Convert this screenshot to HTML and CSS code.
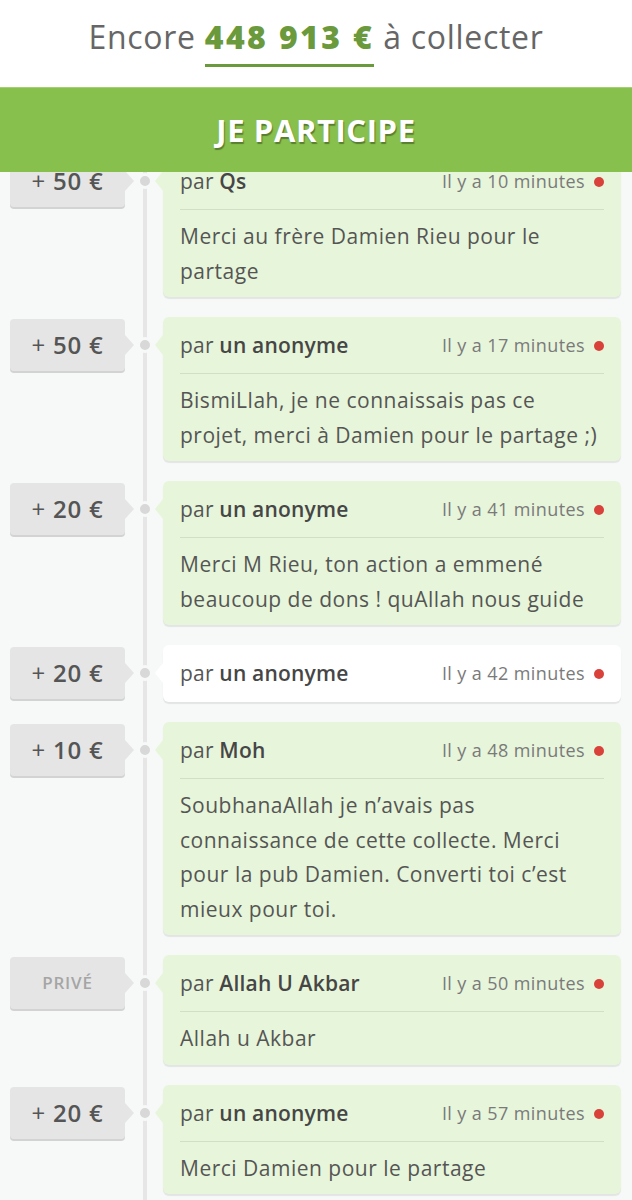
FILE: index.html
```html
<!DOCTYPE html>
<html lang="fr">
<head>
    <meta charset="UTF-8">
    <meta name="viewport" content="width=device-width, initial-scale=1.0">
    <title>Collecte - Dons</title>
    <link rel="stylesheet" href="styles.css">
</head>
<body>
    <header class="top">
        <div class="goal">
            Encore <span class="goal-amount">448 913 €</span> à collecter
        </div>
        <a class="cta" href="#">JE PARTICIPE</a>
    </header>

    <main class="feed">
        <div class="donation">
            <div class="amount"><span class="plus">+</span> 50 €</div>
            <div class="card">
                <div class="card-head">
                    <span class="author">par <b>Qs</b></span>
                    <span class="time">Il y a 10 minutes</span>
                </div>
                <p class="message">Merci au frère Damien Rieu pour le partage</p>
            </div>
        </div>

        <div class="donation">
            <div class="amount"><span class="plus">+</span> 50 €</div>
            <div class="card">
                <div class="card-head">
                    <span class="author">par <b>un anonyme</b></span>
                    <span class="time">Il y a 17 minutes</span>
                </div>
                <p class="message">BismiLlah, je ne connaissais pas ce projet, merci à Damien pour le partage ;)</p>
            </div>
        </div>

        <div class="donation">
            <div class="amount"><span class="plus">+</span> 20 €</div>
            <div class="card">
                <div class="card-head">
                    <span class="author">par <b>un anonyme</b></span>
                    <span class="time">Il y a 41 minutes</span>
                </div>
                <p class="message">Merci M Rieu, ton action a emmené beaucoup de dons ! quAllah nous guide</p>
            </div>
        </div>

        <div class="donation">
            <div class="amount"><span class="plus">+</span> 20 €</div>
            <div class="card card-plain">
                <div class="card-head">
                    <span class="author">par <b>un anonyme</b></span>
                    <span class="time">Il y a 42 minutes</span>
                </div>
            </div>
        </div>

        <div class="donation">
            <div class="amount"><span class="plus">+</span> 10 €</div>
            <div class="card">
                <div class="card-head">
                    <span class="author">par <b>Moh</b></span>
                    <span class="time">Il y a 48 minutes</span>
                </div>
                <p class="message">SoubhanaAllah je n’avais pas connaissance de cette collecte. Merci pour la pub Damien. Converti toi c’est mieux pour toi.</p>
            </div>
        </div>

        <div class="donation">
            <div class="amount amount-private">PRIVÉ</div>
            <div class="card">
                <div class="card-head">
                    <span class="author">par <b>Allah U Akbar</b></span>
                    <span class="time">Il y a 50 minutes</span>
                </div>
                <p class="message">Allah u Akbar</p>
            </div>
        </div>

        <div class="donation">
            <div class="amount"><span class="plus">+</span> 20 €</div>
            <div class="card">
                <div class="card-head">
                    <span class="author">par <b>un anonyme</b></span>
                    <span class="time">Il y a 57 minutes</span>
                </div>
                <p class="message">Merci Damien pour le partage</p>
            </div>
        </div>
    </main>
</body>
</html>
```

FILE: styles.css
```css
/* Base */
body {
    font-family: "Open Sans", Lato, sans-serif;
    background-color: #f7f8f8;
    color: #555;
    margin: 0;
    padding: 0;
}

/* Barre du haut (reste fixe pendant le défilement) */
.top {
    position: fixed;
    top: 0;
    left: 0;
    right: 0;
    z-index: 10;
}
.goal {
    background: white;
    height: 87px;
    box-sizing: border-box;
    padding-top: 15px;
    text-align: center;
    font-size: 32px;
    letter-spacing: 0.7px;
    color: #666;
}
.goal-amount {
    color: #6b9a3d;
    font-weight: 800;
    display: inline-block;
    letter-spacing: 2.4px;
    padding-bottom: 6px;
    border-bottom: 3px solid #6b9a3d;
}
.cta {
    display: block;
    height: 85px;
    line-height: 84px;
    background-color: #87c04c;
    border-top: 1px solid #a3d072;
    box-sizing: border-box;
    text-align: center;
    color: white;
    font-size: 31px;
    font-weight: 700;
    letter-spacing: 0.6px;
    text-decoration: none;
    text-shadow: 1px 2px 1px rgba(0, 0, 0, 0.35);
}

/* Fil des dons */
.feed {
    margin-top: 153px;
    padding: 0 11px 20px 10px;
    background: linear-gradient(to right, transparent 143px, #e6e6e6 143px, #e6e6e6 147px, transparent 147px);
}
.donation {
    position: relative;
    display: flex;
    align-items: flex-start;
    margin-bottom: 20px;
}
/* point sur la ligne du temps */
.donation::before {
    content: "";
    position: absolute;
    left: 127px;
    top: 20px;
    width: 10px;
    height: 10px;
    border-radius: 50%;
    background: #d8d8d8;
    border: 3px solid #f7f8f8;
}

.amount {
    position: relative;
    width: 115px;
    height: 52px;
    margin-top: 2px;
    flex-shrink: 0;
    background-color: #e5e5e5;
    border-radius: 4px;
    box-shadow: 0 2px 0 #d3d3d3;
    text-align: center;
    line-height: 52px;
    font-size: 24px;
    font-weight: 600;
    letter-spacing: 0.8px;
    color: #555;
}
.amount .plus {
    font-weight: 400;
}
.amount::after {
    content: "";
    position: absolute;
    right: -9px;
    top: 16px;
    border-style: solid;
    border-width: 10px 0 10px 9px;
    border-color: transparent transparent transparent #e5e5e5;
}
.amount-private {
    font-size: 17px;
    letter-spacing: 0.8px;
    font-weight: 600;
    color: #a5a5a5;
}

.card {
    position: relative;
    flex: 1;
    margin-left: 38px;
    background-color: #e7f5da;
    border-radius: 6px;
    box-shadow: 0 2px 1px rgba(0, 0, 0, 0.08);
    padding: 0 17px 0 17px;
}
.card::before {
    content: "";
    position: absolute;
    left: -8px;
    top: 18px;
    border-style: solid;
    border-width: 10px 8px 10px 0;
    border-color: transparent #e7f5da transparent transparent;
}
.card-plain {
    background-color: white;
}
.card-plain::before {
    border-color: transparent white transparent transparent;
}

.card-head {
    display: flex;
    justify-content: space-between;
    align-items: center;
    height: 56px;
    border-bottom: 1px solid #d2dfc6;
    font-size: 21px;
    letter-spacing: 0.2px;
}
.card-plain .card-head {
    border-bottom-color: transparent;
}
.card-head b {
    font-weight: 600;
    color: #464646;
}
.time {
    font-size: 18px;
    letter-spacing: 0.4px;
    color: #7a7a7a;
}
.time::after {
    content: "";
    display: inline-block;
    width: 10px;
    height: 10px;
    margin-left: 9px;
    border-radius: 50%;
    background: #d9413b;
    vertical-align: 1px;
}

.message {
    margin: 0;
    padding: 9px 0 9px;
    font-size: 21px;
    letter-spacing: 0.5px;
    line-height: 34.5px;
    color: #555;
}
```
